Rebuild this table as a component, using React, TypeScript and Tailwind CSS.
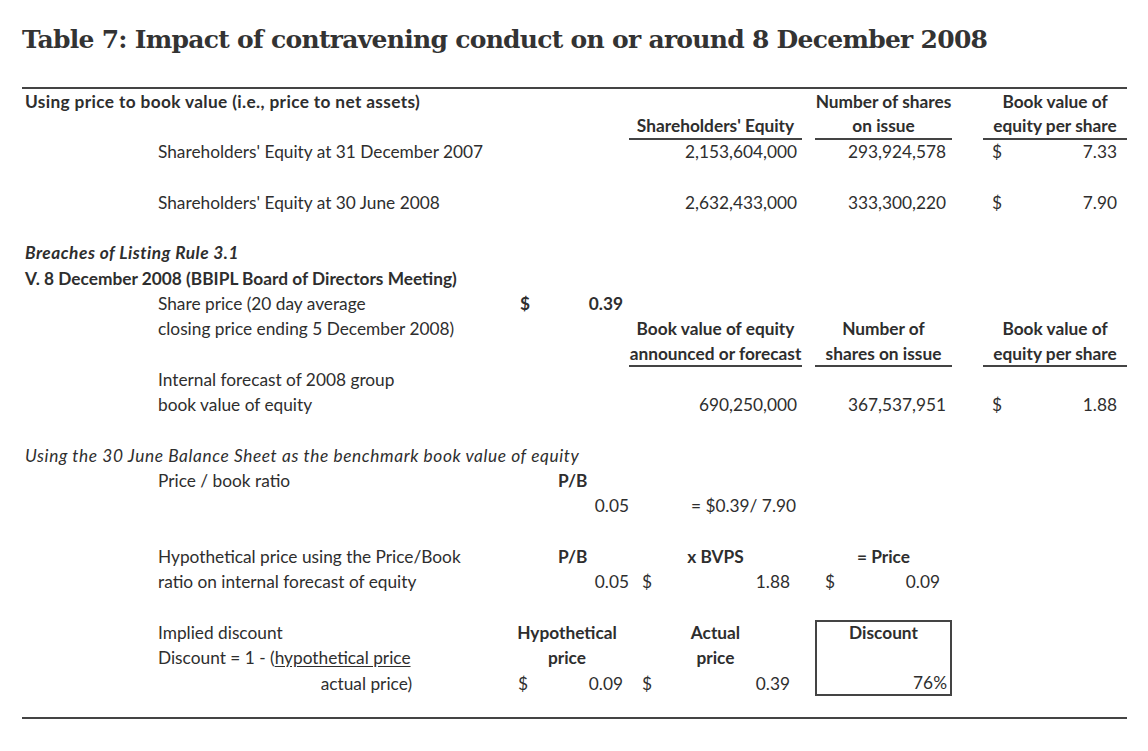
import React from "react";

const C = "flex items-center whitespace-nowrap";

export default function App() {
  return (
    <div className="w-[1148px] h-[751px] bg-white text-[#2e2e2e] overflow-hidden">
      <h1 className="ml-[22px] mt-[22px] h-[36px] leading-[36px] text-[25px] tracking-[-0.72px] font-bold text-[#333] [font-family:'DejaVu_Serif',serif]">
        Table 7: Impact of contravening conduct on or around 8 December 2008
      </h1>
      <div className="ml-[22px] mt-[29px] w-[1105px] h-[2px] bg-[#444]" />
      <div className="ml-[22px] w-[1105px] grid grid-cols-[136px_347px_124px_173px_13px_137px_31px_144px] auto-rows-[25.3px] text-[17.3px] [font-family:Lato,'Open_Sans',sans-serif]">
        {/* row 1 */}
        <div className={`${C} row-start-1 col-start-1 col-span-4 pl-[3px] font-bold tracking-[0.35px]`}>Using price to book value (i.e., price to net assets)</div>
        <div className={`${C} row-start-1 col-start-6 justify-center font-bold`}>Number of shares</div>
        <div className={`${C} row-start-1 col-start-8 justify-center font-bold`}>Book value of</div>
        {/* row 2 */}
        <div className={`${C} row-start-2 col-start-4 justify-center font-bold border-b-2 border-[#444]`}>Shareholders' Equity</div>
        <div className={`${C} row-start-2 col-start-6 justify-center font-bold border-b-2 border-[#444]`}>on issue</div>
        <div className={`${C} row-start-2 col-start-8 justify-center font-bold border-b-2 border-[#444]`}>equity per share</div>
        {/* row 3 */}
        <div className={`${C} row-start-3 col-start-2`}>Shareholders' Equity at 31 December 2007</div>
        <div className={`${C} row-start-3 col-start-4 justify-end pr-[5px]`}>2,153,604,000</div>
        <div className={`${C} row-start-3 col-start-6 justify-end pr-[6px]`}>293,924,578</div>
        <div className={`${C} row-start-3 col-start-8 justify-between pl-[9px] pr-[10px]`}><span>$</span><span>7.33</span></div>
        {/* row 5 */}
        <div className={`${C} row-start-5 col-start-2`}>Shareholders' Equity at 30 June 2008</div>
        <div className={`${C} row-start-5 col-start-4 justify-end pr-[5px]`}>2,632,433,000</div>
        <div className={`${C} row-start-5 col-start-6 justify-end pr-[6px]`}>333,300,220</div>
        <div className={`${C} row-start-5 col-start-8 justify-between pl-[9px] pr-[10px]`}><span>$</span><span>7.90</span></div>
        {/* row 7 */}
        <div className={`${C} row-start-7 col-start-1 col-span-3 pl-[3px] font-bold italic tracking-[0.5px]`}>Breaches of Listing Rule 3.1</div>
        {/* row 8 */}
        <div className={`${C} row-start-8 col-start-1 col-span-3 pl-[3px] font-bold`}>V. 8 December 2008 (BBIPL Board of Directors Meeting)</div>
        {/* row 9 */}
        <div className={`${C} row-start-9 col-start-2`}>Share price (20 day average</div>
        <div className={`${C} row-start-9 col-start-3 justify-between pl-[15px] pr-[6px] font-bold`}><span>$</span><span>0.39</span></div>
        {/* row 10 */}
        <div className={`${C} row-start-10 col-start-2`}>closing price ending 5 December 2008)</div>
        <div className={`${C} row-start-10 col-start-4 justify-center font-bold`}>Book value of equity</div>
        <div className={`${C} row-start-10 col-start-6 justify-center font-bold`}>Number of</div>
        <div className={`${C} row-start-10 col-start-8 justify-center font-bold`}>Book value of</div>
        {/* row 11 */}
        <div className={`${C} row-start-11 col-start-4 justify-center font-bold border-b-2 border-[#444]`}>announced or forecast</div>
        <div className={`${C} row-start-11 col-start-6 justify-center font-bold border-b-2 border-[#444]`}>shares on issue</div>
        <div className={`${C} row-start-11 col-start-8 justify-center font-bold border-b-2 border-[#444]`}>equity per share</div>
        {/* row 12-13 */}
        <div className={`${C} row-start-12 col-start-2`}>Internal forecast of 2008 group</div>
        <div className={`${C} row-start-13 col-start-2`}>book value of equity</div>
        <div className={`${C} row-start-13 col-start-4 justify-end pr-[5px]`}>690,250,000</div>
        <div className={`${C} row-start-13 col-start-6 justify-end pr-[6px]`}>367,537,951</div>
        <div className={`${C} row-start-13 col-start-8 justify-between pl-[9px] pr-[10px]`}><span>$</span><span>1.88</span></div>
        {/* row 15 */}
        <div className={`${C} row-start-15 col-start-1 col-span-4 pl-[3px] italic tracking-[0.6px]`}>Using the 30 June Balance Sheet as the benchmark book value of equity</div>
        {/* row 16 */}
        <div className={`${C} row-start-16 col-start-2`}>Price / book ratio</div>
        <div className={`${C} row-start-16 col-start-3 pl-[53px] font-bold`}>P/B</div>
        {/* row 17 */}
        <div className={`${C} row-start-17 col-start-3 justify-end`}>0.05</div>
        <div className={`${C} row-start-17 col-start-4 justify-end pr-[6px]`}>= $0.39/ 7.90</div>
        {/* row 19 */}
        <div className={`${C} row-start-19 col-start-2`}>Hypothetical price using the Price/Book</div>
        <div className={`${C} row-start-19 col-start-3 pl-[53px] font-bold`}>P/B</div>
        <div className={`${C} row-start-19 col-start-4 justify-center font-bold`}>x BVPS</div>
        <div className={`${C} row-start-19 col-start-6 justify-center font-bold`}>= Price</div>
        {/* row 20 */}
        <div className={`${C} row-start-20 col-start-2`}>ratio on internal forecast of equity</div>
        <div className={`${C} row-start-20 col-start-3 justify-end`}>0.05</div>
        <div className={`${C} row-start-20 col-start-4 justify-between pl-[13px] pr-[12px]`}><span>$</span><span>1.88</span></div>
        <div className={`${C} row-start-20 col-start-6 justify-between pl-[10px] pr-[12px]`}><span>$</span><span>0.09</span></div>
        {/* row 22-24 */}
        <div className={`${C} row-start-22 col-start-2`}>Implied discount</div>
        <div className={`${C} row-start-22 col-start-3 justify-center font-bold`}>Hypothetical</div>
        <div className={`${C} row-start-22 col-start-4 justify-center font-bold`}>Actual</div>
        <div className={`${C} row-start-23 col-start-2`}>
          Discount = 1 - (<span className="underline underline-offset-2">hypothetical price</span>
        </div>
        <div className={`${C} row-start-23 col-start-3 justify-center font-bold`}>price</div>
        <div className={`${C} row-start-23 col-start-4 justify-center font-bold`}>price</div>
        <div className={`${C} row-start-24 col-start-2 justify-end pr-[93px]`}>actual price)</div>
        <div className={`${C} row-start-24 col-start-3 justify-between pl-[13px] pr-[6px]`}><span>$</span><span>0.09</span></div>
        <div className={`${C} row-start-24 col-start-4 justify-between pl-[13px] pr-[12px]`}><span>$</span><span>0.39</span></div>
        <div className="row-start-22 row-span-3 col-start-6 border-2 border-[#444] flex flex-col justify-between">
          <div className="h-[22px] flex items-center justify-center font-bold">Discount</div>
          <div className="h-[22px] flex items-center justify-end pr-[3px]">76%</div>
        </div>
      </div>
      <div className="ml-[22px] mt-[21px] w-[1105px] h-[2px] bg-[#444]" />
    </div>
  );
}
